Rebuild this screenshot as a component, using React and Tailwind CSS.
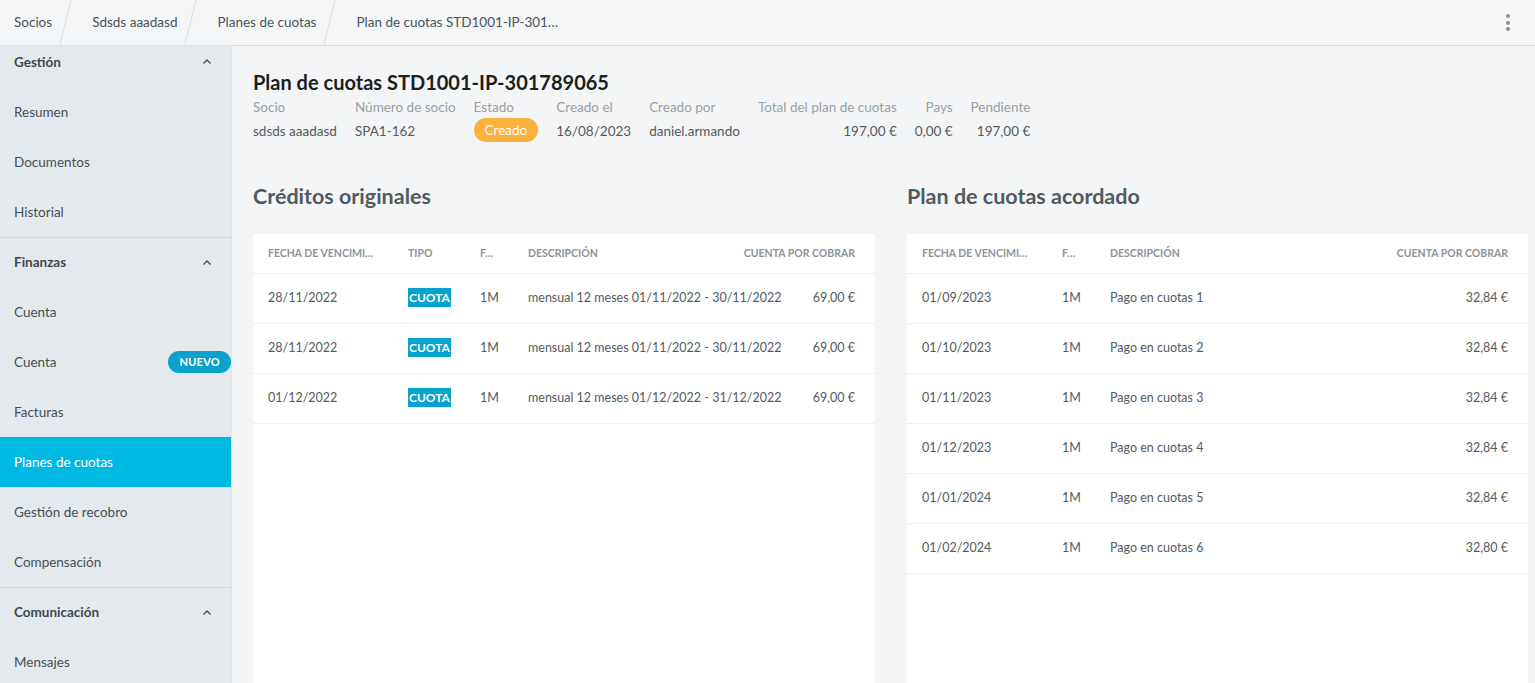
import React from 'react';

const font = { fontFamily: 'Lato, "Open Sans", sans-serif' };

const crumbs = ['Socios', 'Sdsds aaadasd', 'Planes de cuotas', 'Plan de cuotas STD1001-IP-301…'];

const sections = [
  { title: 'Gestión', items: [{ label: 'Resumen' }, { label: 'Documentos' }, { label: 'Historial' }] },
  {
    title: 'Finanzas',
    items: [
      { label: 'Cuenta' },
      { label: 'Cuenta', badge: 'NUEVO' },
      { label: 'Facturas' },
      { label: 'Planes de cuotas', active: true },
      { label: 'Gestión de recobro' },
      { label: 'Compensación' },
    ],
  },
  { title: 'Comunicación', items: [{ label: 'Mensajes' }] },
];

const meta = [
  { label: 'Socio', value: 'sdsds aaadasd' },
  { label: 'Número de socio', value: 'SPA1-162' },
  { label: 'Estado', badge: 'Creado' },
  { label: 'Creado el', value: '16/08/2023' },
  { label: 'Creado por', value: 'daniel.armando' },
  { label: 'Total del plan de cuotas', value: '197,00 €', right: true },
  { label: 'Pays', value: '0,00 €', right: true },
  { label: 'Pendiente', value: '197,00 €', right: true },
];

const creditos = [
  ['28/11/2022', '1M', 'mensual 12 meses 01/11/2022 - 30/11/2022', '69,00 €'],
  ['28/11/2022', '1M', 'mensual 12 meses 01/11/2022 - 30/11/2022', '69,00 €'],
  ['01/12/2022', '1M', 'mensual 12 meses 01/12/2022 - 31/12/2022', '69,00 €'],
];

const cuotas = [
  ['01/09/2023', '1M', 'Pago en cuotas 1', '32,84 €'],
  ['01/10/2023', '1M', 'Pago en cuotas 2', '32,84 €'],
  ['01/11/2023', '1M', 'Pago en cuotas 3', '32,84 €'],
  ['01/12/2023', '1M', 'Pago en cuotas 4', '32,84 €'],
  ['01/01/2024', '1M', 'Pago en cuotas 5', '32,84 €'],
  ['01/02/2024', '1M', 'Pago en cuotas 6', '32,80 €'],
];

const ChevronUp = () => (
  <svg className="w-3 h-3 text-[#4a5358]" viewBox="0 0 12 12" fill="none" stroke="currentColor" strokeWidth="1.4">
    <path d="M2.5 7.5L6 4l3.5 3.5" />
  </svg>
);

const Sidebar = () => (
  <aside className="w-[232px] shrink-0 bg-[#e4e9ed] border-r border-[#dde2e6] overflow-hidden">
    <div className="-mt-[9px]">
      {sections.map((s, i) => (
        <div key={s.title} className={i > 0 ? 'border-t border-[#cfd6db]' : ''}>
          <div className={`${i > 0 ? 'h-[49px]' : 'h-[50px]'} flex items-center justify-between pl-[14px] pr-[18px]`}>
            <span className="text-[13.5px] font-bold text-[#3f484d]">{s.title}</span>
            <ChevronUp />
          </div>
          {s.items.map((it, j) => (
            <div
              key={j}
              className={`h-[50px] flex items-center justify-between pl-[14px] text-[13.5px] ${
                it.active ? 'bg-[#00b9e3] text-white' : 'text-[#474f54]'
              }`}
            >
              <span>{it.label}</span>
              {it.badge && (
                <span className="h-[22px] px-[11px] flex items-center rounded-full bg-[#0aa2cc] text-white text-[11px] font-bold tracking-wide">
                  {it.badge}
                </span>
              )}
            </div>
          ))}
        </div>
      ))}
    </div>
  </aside>
);

const Table = ({ cols, rows, renderRow }) => (
  <div className="bg-white flex-1 min-h-0">
    <div className="h-[40px] flex items-center border-b border-[#edf0f2] pl-[15px] pr-[20px] text-[10.5px] font-bold uppercase text-[#8c949a]">
      {cols.map((c, i) => (
        <div key={i} className={c.cls}>
          {c.label}
        </div>
      ))}
    </div>
    {rows.map((r, i) => (
      <div key={i} className="h-[50px] flex items-center border-b border-[#edf0f2] pl-[15px] pr-[20px] text-[12.5px] text-[#535b60]">
        {renderRow(r)}
      </div>
    ))}
  </div>
);

export default function App() {
  return (
    <div style={font} className="w-[1535px] h-[683px] flex flex-col bg-[#f4f5f7] overflow-hidden">
      <header className="h-[46px] shrink-0 flex items-center justify-between bg-[#f5f6f7] border-b border-[#dcdfe2]">
        <nav className="flex items-stretch h-full">
          {crumbs.map((c, i) => (
            <div key={i} className="flex items-center h-full">
              <span className={`text-[13.5px] text-[#4a5358] ${i === 0 ? 'pl-[14px]' : 'pl-[26px]'}`}>{c}</span>
              {i < crumbs.length - 1 && (
                <div className="ml-[13px] h-full w-px bg-[#dcdfe2] -skew-x-[14deg]" />
              )}
            </div>
          ))}
        </nav>
        <div className="pr-[25px] flex flex-col gap-[2.5px]">
          <span className="w-[4px] h-[4px] rounded-full bg-[#8c8f92]" />
          <span className="w-[4px] h-[4px] rounded-full bg-[#8c8f92]" />
          <span className="w-[4px] h-[4px] rounded-full bg-[#8c8f92]" />
        </div>
      </header>

      <div className="flex flex-1 min-h-0">
        <Sidebar />
        <main className="flex-1 min-w-0 pl-[21px] pr-[7px] pt-[23px] flex flex-col">
          <h1 className="text-[20px] font-bold text-[#1b1f22] leading-[26px]">Plan de cuotas STD1001-IP-301789065</h1>
          <div className="flex gap-[18px] mt-[2px]">
            {meta.map((m) => (
              <div key={m.label} className={`flex flex-col ${m.right ? 'items-end' : 'items-start'}`}>
                <span className="text-[13.5px] text-[#9aa0a4] leading-[20px]">{m.label}</span>
                {m.badge ? (
                  <span className="mt-[1px] h-[24px] px-[11px] flex items-center rounded-full bg-[#fbb13c] text-white text-[13.5px]">
                    {m.badge}
                  </span>
                ) : (
                  <span className="mt-[4px] text-[13.5px] text-[#535b60] leading-[20px]">{m.value}</span>
                )}
              </div>
            ))}
          </div>

          <div className="flex gap-[32px] mt-[41px] flex-1 min-h-0">
            <section className="w-[622px] flex flex-col">
              <h2 className="text-[21.5px] font-bold text-[#505a60] h-[26px] leading-[26px]">Créditos originales</h2>
              <div className="mt-[25px] flex-1 flex flex-col">
                <Table
                  cols={[
                    { label: 'Fecha de vencimi…', cls: 'w-[140px]' },
                    { label: 'Tipo', cls: 'w-[72px]' },
                    { label: 'F…', cls: 'w-[48px]' },
                    { label: 'Descripción', cls: 'flex-1' },
                    { label: 'Cuenta por cobrar', cls: 'text-right' },
                  ]}
                  rows={creditos}
                  renderRow={(r) => (
                    <>
                      <div className="w-[140px]">{r[0]}</div>
                      <div className="w-[72px]">
                        <span className="bg-[#06a3cf] text-white font-bold text-[12px] px-[1px] py-[2px]">CUOTA</span>
                      </div>
                      <div className="w-[48px]">{r[1]}</div>
                      <div className="flex-1">{r[2]}</div>
                      <div className="text-right">{r[3]}</div>
                    </>
                  )}
                />
              </div>
            </section>
            <section className="w-[621px] flex flex-col">
              <h2 className="text-[21.5px] font-bold text-[#505a60] h-[26px] leading-[26px]">Plan de cuotas acordado</h2>
              <div className="mt-[25px] flex-1 flex flex-col">
                <Table
                  cols={[
                    { label: 'Fecha de vencimi…', cls: 'w-[140px]' },
                    { label: 'F…', cls: 'w-[48px]' },
                    { label: 'Descripción', cls: 'flex-1' },
                    { label: 'Cuenta por cobrar', cls: 'text-right' },
                  ]}
                  rows={cuotas}
                  renderRow={(r) => (
                    <>
                      <div className="w-[140px]">{r[0]}</div>
                      <div className="w-[48px]">{r[1]}</div>
                      <div className="flex-1">{r[2]}</div>
                      <div className="text-right">{r[3]}</div>
                    </>
                  )}
                />
              </div>
            </section>
          </div>
        </main>
      </div>
    </div>
  );
}
